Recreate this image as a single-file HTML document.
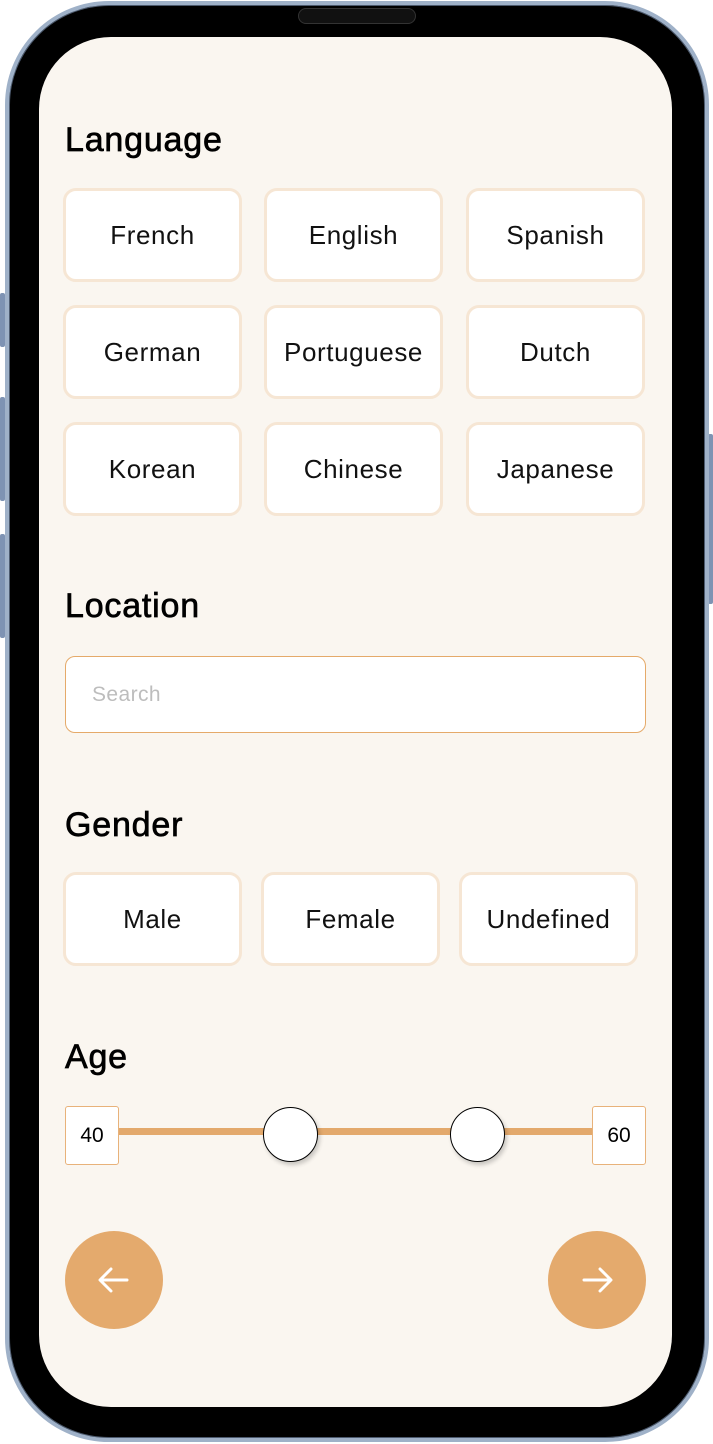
<!DOCTYPE html>
<html><head><style>
*{margin:0;padding:0;box-sizing:border-box}
body{width:713px;height:1444px;background:#fff;position:relative;overflow:hidden;font-family:"Liberation Sans",sans-serif}
.frame{position:absolute;left:5px;top:1px;width:704px;height:1441px;border-radius:104px;background:#000;border:4px solid #9fb1c8;box-shadow:0 0 0 1px #4c5a6e inset}
.screen{position:absolute;left:39px;top:37px;width:633px;height:1370px;border-radius:72px;background:#faf6f0;overflow:hidden}
.notch{position:absolute;left:298px;top:8px;width:118px;height:16px;border-radius:8px;background:#111;border:1px solid #333}
h2{position:absolute;font-size:34px;font-weight:normal;color:#000;-webkit-text-stroke:0.7px #000;letter-spacing:0.8px}
.b{position:absolute;background:#fff;border:3px solid #f6e6d4;border-radius:13px;display:flex;align-items:center;justify-content:center;font-size:26px;color:#111;letter-spacing:0.6px}
.side{position:absolute;width:5px;background:#7e93b3;border-radius:2px}
</style></head><body>
<div class="side" style="left:0;top:293px;height:54px"></div>
<div class="side" style="left:0;top:397px;height:104px"></div>
<div class="side" style="left:0;top:534px;height:104px"></div>
<div class="side" style="left:708px;top:434px;height:170px"></div>
<div class="frame"></div>
<div class="notch"></div>
<div class="screen">
<h2 style="left:26px;top:84px">Language</h2>
<div class="b" style="left:24px;top:151px;width:179px;height:94px">French</div>
<div class="b" style="left:225px;top:151px;width:179px;height:94px">English</div>
<div class="b" style="left:427px;top:151px;width:179px;height:94px">Spanish</div>
<div class="b" style="left:24px;top:268px;width:179px;height:94px">German</div>
<div class="b" style="left:225px;top:268px;width:179px;height:94px">Portuguese</div>
<div class="b" style="left:427px;top:268px;width:179px;height:94px">Dutch</div>
<div class="b" style="left:24px;top:385px;width:179px;height:94px">Korean</div>
<div class="b" style="left:225px;top:385px;width:179px;height:94px">Chinese</div>
<div class="b" style="left:427px;top:385px;width:179px;height:94px">Japanese</div>
<h2 style="left:26px;top:550px">Location</h2>
<div style="position:absolute;left:26px;top:619px;width:581px;height:77px;background:#fff;border:1.5px solid #e5aa6a;border-radius:10px;font-size:21px;color:#bdbdbd;padding:26px 0 0 26px;letter-spacing:0.4px">Search</div>
<h2 style="left:26px;top:769px">Gender</h2>
<div class="b" style="left:24px;top:835px;width:179px;height:94px">Male</div>
<div class="b" style="left:222px;top:835px;width:179px;height:94px">Female</div>
<div class="b" style="left:420px;top:835px;width:179px;height:94px">Undefined</div>
<h2 style="left:26px;top:1001px">Age</h2>
<div style="position:absolute;left:78px;top:1091px;width:476px;height:7px;background:#e3a96c"></div>
<div style="position:absolute;left:26px;top:1069px;width:54px;height:59px;background:#fff;border:1.5px solid #e8b27a;border-radius:3px;font-size:21px;display:flex;align-items:center;justify-content:center">40</div>
<div style="position:absolute;left:553px;top:1069px;width:54px;height:59px;background:#fff;border:1.5px solid #e8b27a;border-radius:3px;font-size:21px;display:flex;align-items:center;justify-content:center">60</div>
<div style="position:absolute;left:224px;top:1070px;width:55px;height:55px;border-radius:50%;background:#fff;border:1.5px solid #000;box-shadow:2px 3px 4px rgba(0,0,0,.2)"></div>
<div style="position:absolute;left:411px;top:1070px;width:55px;height:55px;border-radius:50%;background:#fff;border:1.5px solid #000;box-shadow:2px 3px 4px rgba(0,0,0,.2)"></div>
<svg style="position:absolute;left:26px;top:1194px" width="98" height="98"><circle cx="49" cy="49" r="49" fill="#e4aa6d"/><path d="M62 49H36M46 38L35 49L46 60" stroke="#fff" stroke-width="3" fill="none" stroke-linecap="round" stroke-linejoin="round"/></svg>
<svg style="position:absolute;left:509px;top:1194px" width="98" height="98"><circle cx="49" cy="49" r="49" fill="#e4aa6d"/><path d="M36 49H62M52 38L63 49L52 60" stroke="#fff" stroke-width="3" fill="none" stroke-linecap="round" stroke-linejoin="round"/></svg>
</div>
</body></html>
